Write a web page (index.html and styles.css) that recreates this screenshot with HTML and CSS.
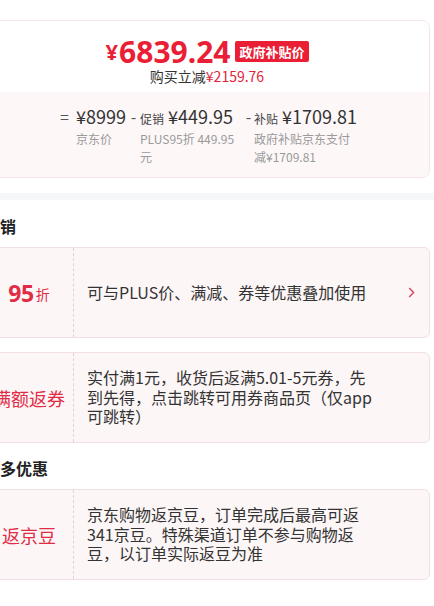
FILE: index.html
```html
<!DOCTYPE html>
<html lang="zh-CN">
<head>
    <meta charset="UTF-8">
    <meta name="viewport" content="width=device-width, initial-scale=1.0">
    <title>价格详情</title>
    <link rel="stylesheet" href="styles.css">
</head>
<body>
    <div class="page">
        <section class="price-card">
            <div class="price-head">
                <div class="final"><span class="yen">¥</span>6839.24<span class="tag">政府补贴价</span></div>
                <div class="save">购买立减<span class="red">¥2159.76</span></div>
            </div>
            <div class="price-calc">
                <span class="op first">=</span>
                <div class="calc-col c1">
                    <div class="amt">¥8999</div>
                    <div class="note">京东价</div>
                </div>
                <span class="op">-</span>
                <div class="calc-col c2">
                    <div class="amt"><span class="lbl">促销</span>¥449.95</div>
                    <div class="note">PLUS95折 449.95元</div>
                </div>
                <span class="op">-</span>
                <div class="calc-col c3">
                    <div class="amt"><span class="lbl">补贴</span>¥1709.81</div>
                    <div class="note">政府补贴京东支付减¥1709.81</div>
                </div>
            </div>
        </section>

        <div class="divider"></div>

        <section class="promo">
            <h3>促销</h3>
            <div class="coupon">
                <div class="coupon-left"><span class="num">95</span><span class="unit">折</span></div>
                <div class="coupon-body">
                    <p>可与PLUS价、满减、券等优惠叠加使用</p>
                    <svg class="arrow" width="7" height="11" viewBox="0 0 7 11"><path d="M1.2 1 L5.6 5.5 L1.2 10" fill="none" stroke="#d8435a" stroke-width="1.4"/></svg>
                </div>
            </div>
            <div class="coupon">
                <div class="coupon-left"><span class="word">满额返券</span></div>
                <div class="coupon-body">
                    <p>实付满1元，收货后返满5.01-5元券，先到先得，点击跳转可用券商品页（仅app可跳转）</p>
                </div>
            </div>

            <h3>更多优惠</h3>
            <div class="coupon">
                <div class="coupon-left"><span class="word">返京豆</span></div>
                <div class="coupon-body">
                    <p>京东购物返京豆，订单完成后最高可返341京豆。特殊渠道订单不参与购物返豆，以订单实际返豆为准</p>
                </div>
            </div>
        </section>
    </div>
</body>
</html>
```

FILE: styles.css
```css
body {
    margin: 0;
    padding: 0;
    background-color: #fff;
    font-family: "Noto Sans CJK SC", sans-serif;
    color: #333;
    overflow: hidden;
}
.page {
    width: 446px;
    margin-left: -16px;
    padding-top: 20px;
}
.price-card {
    border: 1px solid #f4e4e7;
    border-radius: 8px;
    overflow: hidden;
}
.price-head {
    background-color: #fff;
    text-align: center;
    padding: 15px 0 7px;
}
.final {
    display: flex;
    justify-content: center;
    align-items: center;
    height: 31px;
    font-family: "Noto Sans", "Noto Sans CJK SC", sans-serif;
    font-size: 30px;
    line-height: 31px;
    font-weight: 700;
    color: #ea1f35;
}
.final .yen {
    font-size: 22px;
    margin-right: 1px;
}
.final .tag {
    margin-left: 5px;
    padding: 0 4px;
    font-family: "Noto Sans CJK SC", sans-serif;
    font-size: 13px;
    line-height: 21px;
    font-weight: 700;
    color: #fff;
    background-color: #ea1f35;
    border-radius: 2px;
}
.save {
    font-size: 14px;
    line-height: 18px;
}
.save .red {
    color: #e0243a;
}
.price-calc {
    display: flex;
    justify-content: center;
    align-items: flex-start;
    background-color: #fdf7f8;
    padding: 12px 0 11px;
}
.op {
    width: 13px;
    font-size: 16px;
    line-height: 24px;
    color: #555;
    text-align: center;
}
.op.first {
    width: 16px;
    text-align: left;
}
.calc-col.c1 {
    width: 51px;
}
.calc-col.c2 {
    width: 102px;
}
.calc-col.c2 .note {
    width: 100px;
}
.calc-col.c3 {
    width: 100px;
    margin-left: -1px;
}
.amt {
    height: 24px;
    font-size: 18px;
    line-height: 24px;
    color: #333;
    white-space: nowrap;
}
.amt .lbl {
    font-size: 12px;
    line-height: 1;
    margin-right: 4px;
    color: #444;
}
.note {
    margin-top: 2px;
    font-size: 12px;
    line-height: 18px;
    color: #9a9a9a;
}
.divider {
    height: 7px;
    margin: 15px -4px 0 0;
    background-color: #f6f7f9;
}
.promo h3 {
    margin: 14px 0 10px;
    font-size: 16px;
    line-height: 22px;
    font-weight: 700;
    color: #222;
}
.promo h3:first-child {
    margin-top: 15px;
}
.coupon {
    display: flex;
    min-height: 89px;
    margin-bottom: 14px;
    background-color: #fdf6f7;
    border: 1px solid #f1dfe3;
    border-radius: 6px;
}
.coupon-left {
    width: 88px;
    flex-shrink: 0;
    display: flex;
    align-items: center;
    justify-content: center;
    border-right: 1px dashed #e7cfd5;
    color: #e12c45;
}
.coupon-left .num {
    font-family: "Noto Sans", "Noto Sans CJK SC", sans-serif;
    font-size: 23px;
    font-weight: 700;
    letter-spacing: -0.5px;
}
.coupon-left .unit {
    font-size: 14px;
    margin-left: 2px;
    margin-top: 3px;
}
.coupon-left .word {
    font-size: 18px;
}
.coupon-body {
    flex: 1;
    display: flex;
    align-items: center;
    padding-left: 13px;
    padding-right: 14px;
}
.coupon-body p {
    margin: 0;
    width: 288px;
    font-size: 16px;
    line-height: 19.5px;
    color: #333;
}
.arrow {
    margin-left: auto;
}
```
